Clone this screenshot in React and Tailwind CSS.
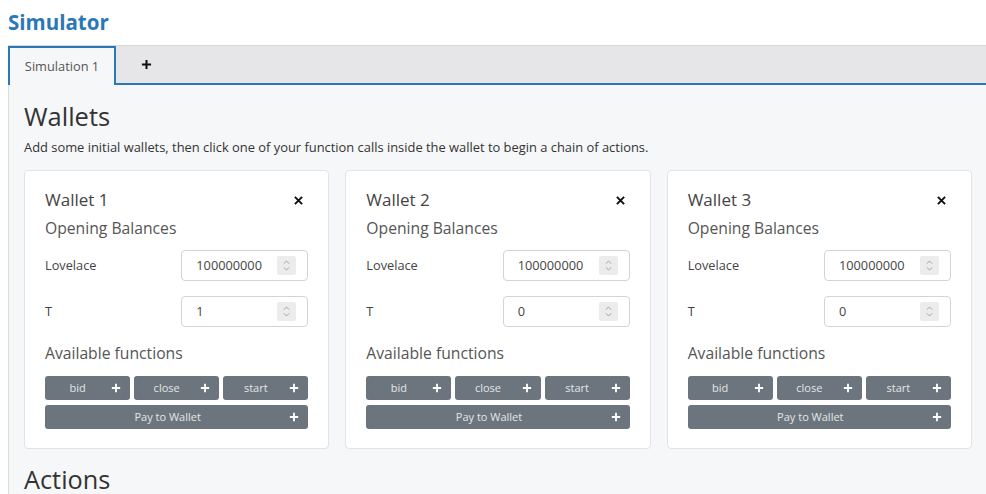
import React from 'react';

const wallets = [
  { id: 1, lovelace: '100000000', t: '1' },
  { id: 2, lovelace: '100000000', t: '0' },
  { id: 3, lovelace: '100000000', t: '0' },
];

const Plus = ({ className = '' }) => (
  <svg viewBox="0 0 12 12" className={className} fill="none" stroke="currentColor" strokeWidth="2.2">
    <path d="M6 1v10M1 6h10" />
  </svg>
);

const Spinner = () => (
  <span className="flex h-[19px] w-[19px] items-center justify-center rounded-[2px] bg-[#ececec]">
    <svg viewBox="0 0 10 14" className="h-[13px] w-[9px]" fill="none" stroke="#9a9a9a" strokeWidth="1">
      <path d="M2 5l3-3 3 3M2 9l3 3 3-3" />
    </svg>
  </span>
);

const NumberField = ({ value }) => (
  <div className="flex h-[31px] w-[127px] items-center justify-between rounded-[4px] border border-[#d2d4d7] bg-white pl-[14px] pr-[11px]">
    <span className="text-[12.75px] leading-[18px] text-[#444]">{value}</span>
    <Spinner />
  </div>
);

const FnButton = ({ label, wide }) => (
  <button className={`relative flex h-[24px] items-center justify-center rounded-[3px] bg-[#6c757d] text-[11px] text-[#e4e6e8] ${wide ? 'col-span-3 pr-[18px]' : 'pr-[20px]'}`}>
    <span>{label}</span>
    <Plus className="absolute right-[9px] h-[10px] w-[10px] text-white" />
  </button>
);

const WalletCard = ({ wallet }) => (
  <div className="rounded-[4px] border border-[#e1e3e6] bg-white px-[20px] pt-[17px] pb-[19px]">
    <div className="flex items-center justify-between">
      <h3 className="text-[17px] leading-[24px] text-[#444]">Wallet {wallet.id}</h3>
      <svg viewBox="0 0 10 10" className="mr-[5px] h-[9px] w-[9px]" fill="none" stroke="#111" strokeWidth="2.2">
        <path d="M1 1l8 8M9 1l-8 8" />
      </svg>
    </div>
    <h4 className="mt-[5px] text-[15.7px] leading-[22.5px] text-[#555]">Opening Balances</h4>
    <div className="mt-[10px] flex items-center justify-between">
      <span className="text-[12.75px] leading-[18px] text-[#444]">Lovelace</span>
      <NumberField value={wallet.lovelace} />
    </div>
    <div className="mt-[15px] flex items-center justify-between">
      <span className="text-[12.75px] leading-[18px] text-[#444]">T</span>
      <NumberField value={wallet.t} />
    </div>
    <h4 className="mt-[15px] text-[15.7px] leading-[22.5px] text-[#555]">Available functions</h4>
    <div className="mt-[12px] grid grid-cols-3 gap-x-[4px] gap-y-[5px]">
      <FnButton label="bid" />
      <FnButton label="close" />
      <FnButton label="start" />
      <FnButton label="Pay to Wallet" wide />
    </div>
  </div>
);

export default function App() {
  return (
    <div className="h-[494px] overflow-hidden bg-white font-['Open_Sans',sans-serif]">
      <h1 className="px-[8px] pt-[8px] text-[20.5px] font-bold leading-[28px] text-[#2a78b6]">Simulator</h1>
      <div className="ml-[8px] mt-[9px] flex h-[40px] border-t border-[#d8d8d8] bg-[#e6e6e8]">
        <div className="flex w-[108px] items-center justify-center border-x-2 border-t-2 border-[#2a78b6] bg-[#f6f7f9] text-[12.8px] text-[#555]">
          Simulation 1
        </div>
        <div className="flex flex-1 items-center border-b-2 border-[#2a78b6]">
          <Plus className="ml-[25px] h-[11px] w-[11px] text-[#111]" />
        </div>
      </div>
      <div className="ml-[8px] h-full border-l border-[#dcdcdc] bg-[#f6f7f9] pl-[15px] pr-[14px] pt-[15px]">
        <h2 className="text-[25.5px] leading-[32px] text-[#333]">Wallets</h2>
        <p className="mt-[6px] text-[12.9px] leading-[18px] text-[#333]">
          Add some initial wallets, then click one of your function calls inside the wallet to begin a chain of actions.
        </p>
        <div className="mt-[14px] grid grid-cols-3 gap-[16px]">
          {wallets.map((w) => (
            <WalletCard key={w.id} wallet={w} />
          ))}
        </div>
        <h2 className="mt-[14px] text-[25.3px] leading-[32px] text-[#333]">Actions</h2>
      </div>
    </div>
  );
}
